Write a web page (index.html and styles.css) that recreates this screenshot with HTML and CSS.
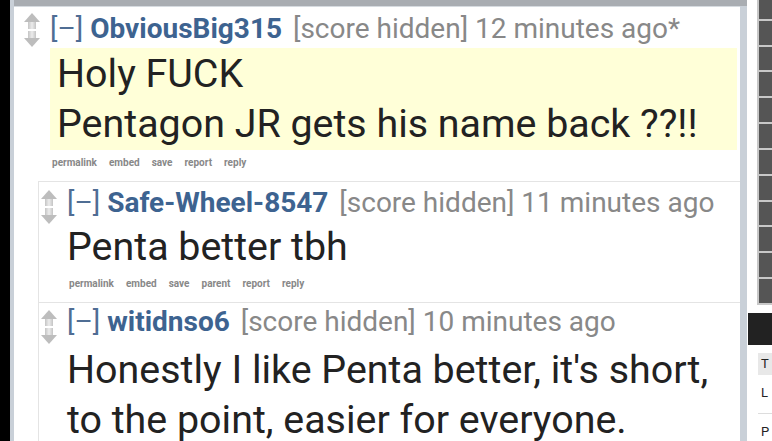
FILE: index.html
```html
<!DOCTYPE html>
<html lang="en">

<head>
    <meta charset="UTF-8">
    <meta name="viewport" content="width=device-width, initial-scale=1.0">
    <title>comments</title>
    <link rel="stylesheet" href="styles.css">
</head>

<body>
    <div class="page">
        <div class="edge"></div>
        <div class="main">
            <div class="topband"></div>
            <div class="sitetable">

                <div class="comment">
                    <div class="arrows">
                        <svg width="16" height="34" viewBox="0 0 16 34">
                            <defs>
                                <linearGradient id="stem" x1="0" x2="1" y1="0" y2="0">
                                    <stop offset="0" stop-color="#c4c4c4" />
                                    <stop offset="0.5" stop-color="#ececec" />
                                    <stop offset="1" stop-color="#c4c4c4" />
                                </linearGradient>
                            </defs>
                            <polygon points="8,0 16,9 0,9" fill="#bdbdbd" />
                            <rect x="4" y="9" width="8" height="7" fill="url(#stem)" />
                            <rect x="4" y="18" width="8" height="7" fill="url(#stem)" />
                            <polygon points="0,25 16,25 8,34" fill="#bdbdbd" />
                        </svg>
                    </div>
                    <div class="entry">
                        <p class="tagline">
                            <span class="expand">[&ndash;]</span>
                            <span class="author">ObviousBig315</span>
                            <span class="meta">[score hidden] 12 minutes ago*</span>
                        </p>
                        <div class="md new">
                            <p>Holy FUCK</p>
                            <p>Pentagon JR gets his name back ??!!</p>
                        </div>
                        <ul class="buttons">
                            <li>permalink</li>
                            <li>embed</li>
                            <li>save</li>
                            <li>report</li>
                            <li>reply</li>
                        </ul>
                    </div>
                </div>

                <div class="child">
                    <div class="comment sub">
                        <div class="arrows">
                            <svg width="16" height="34" viewBox="0 0 16 34">
                                <polygon points="8,0 16,9 0,9" fill="#bdbdbd" />
                                <rect x="4" y="9" width="8" height="7" fill="url(#stem)" />
                                <rect x="4" y="18" width="8" height="7" fill="url(#stem)" />
                                <polygon points="0,25 16,25 8,34" fill="#bdbdbd" />
                            </svg>
                        </div>
                        <div class="entry">
                            <p class="tagline">
                                <span class="expand">[&ndash;]</span>
                                <span class="author">Safe-Wheel-8547</span>
                                <span class="meta">[score hidden] 11 minutes ago</span>
                            </p>
                            <div class="md">
                                <p>Penta better tbh</p>
                            </div>
                            <ul class="buttons">
                                <li>permalink</li>
                                <li>embed</li>
                                <li>save</li>
                                <li>parent</li>
                                <li>report</li>
                                <li>reply</li>
                            </ul>
                        </div>
                    </div>

                    <div class="comment sub sibling">
                        <div class="arrows">
                            <svg width="16" height="34" viewBox="0 0 16 34">
                                <polygon points="8,0 16,9 0,9" fill="#bdbdbd" />
                                <rect x="4" y="9" width="8" height="7" fill="url(#stem)" />
                                <rect x="4" y="18" width="8" height="7" fill="url(#stem)" />
                                <polygon points="0,25 16,25 8,34" fill="#bdbdbd" />
                            </svg>
                        </div>
                        <div class="entry">
                            <p class="tagline">
                                <span class="expand">[&ndash;]</span>
                                <span class="author">witidnso6</span>
                                <span class="meta">[score hidden] 10 minutes ago</span>
                            </p>
                            <div class="md">
                                <p>Honestly I like Penta better, it's short, to the point, easier for everyone.</p>
                            </div>
                        </div>
                    </div>
                </div>

            </div>
        </div>
        <div class="side">
            <div class="grid">
                <div></div><div></div><div></div><div></div><div></div><div></div>
                <div></div><div></div><div></div><div></div><div></div><div></div>
            </div>
            <div class="sidehead"></div>
            <div class="sidetable">
                <div class="th">T</div>
                <div class="td">L</div>
                <div class="td">P</div>
            </div>
        </div>
    </div>
</body>

</html>
```

FILE: styles.css
```css
body,
p,
ul {
    margin: 0;
    padding: 0;
}

body {
    background-color: #000;
    font-family: Roboto, "Liberation Sans", sans-serif;
    overflow: hidden;
}

.page {
    display: flex;
    height: 441px;
}

.edge {
    width: 10px;
    background-color: #000;
}

.main {
    display: flex;
    flex-direction: column;
    width: 737px;
    background-color: #c9d0d8;
    padding: 0 7px 0 4px;
    box-sizing: border-box;
}

.topband {
    flex-shrink: 0;
    height: 6px;
    background-color: #a9adb2;
    margin: 0 -7px 0 0;
}

.sitetable {
    flex: 1;
    background-color: #fff;
    border-top: 1px solid #d6dbe0;
}

.comment {
    display: flex;
    padding: 6px 0 0 10px;
}

.comment .arrows {
    width: 16px;
    padding-top: 0;
    margin-right: 10px;
}

.comment .entry {
    flex: 1;
}

.tagline {
    font-size: 28px;
    line-height: 32px;
    color: #888;
    white-space: nowrap;
}

.tagline .expand {
    color: #4f6d94;
}

.tagline .author {
    font-weight: bold;
    color: #3d6390;
    margin-right: 4px;
}

.md {
    margin-top: 3px;
    color: #222;
    font-size: 39.4px;
    line-height: 50px;
}

.md.new {
    margin: 3px 3px 0 0;
    background-color: #ffffd8;
    padding: 1px 0 1px 7px;
}

.buttons {
    display: flex;
    gap: 12px;
    list-style: none;
    margin: 6px 0 0 2px;
    font-size: 10px;
    font-weight: bold;
    line-height: 14px;
    color: #888;
}

.child {
    margin: 11px 0 0 24px;
    border-left: 1px solid #e4e4e4;
    border-top: 1px solid #e4e4e4;
}

.comment.sub {
    padding: 5px 0 11px 2px;
}

.comment.sub .arrows {
    padding-top: 3px;
}

.comment.sub .buttons {
    margin-top: 5px;
}

.comment.sibling {
    padding-top: 3px;
    border-top: 1px solid #e4e4e4;
}

.comment.sibling .arrows {
    padding-top: 4px;
}

.comment.sibling .md {
    margin-top: 7px;
}

.side {
    flex: 1;
    background-color: #fff;
    padding-left: 1px;
}

.grid {
    margin: -5px 0 0 9px;
    height: 310px;
    box-sizing: border-box;
    border-left: 2px solid #c8c8c8;
    border-bottom: 2px solid #c8c8c8;
    background-color: #c8c8c8;
    display: flex;
    flex-direction: column;
    gap: 2px;
}

.grid div {
    flex: 1;
    background-color: #555;
}

.sidehead {
    height: 32px;
    margin-top: 8px;
    background-color: #222;
}

.sidetable {
    padding: 8px 0 0 10px;
    font-size: 13px;
    color: #222;
}

.sidetable .th {
    background-color: #e8e8e8;
    line-height: 22px;
    padding-left: 3px;
}

.sidetable .td {
    line-height: 18px;
    padding: 9px 0 11px 3px;
    border-bottom: 1px solid #ddd;
}

.sidetable .td:last-child {
    border-bottom: none;
}
```
